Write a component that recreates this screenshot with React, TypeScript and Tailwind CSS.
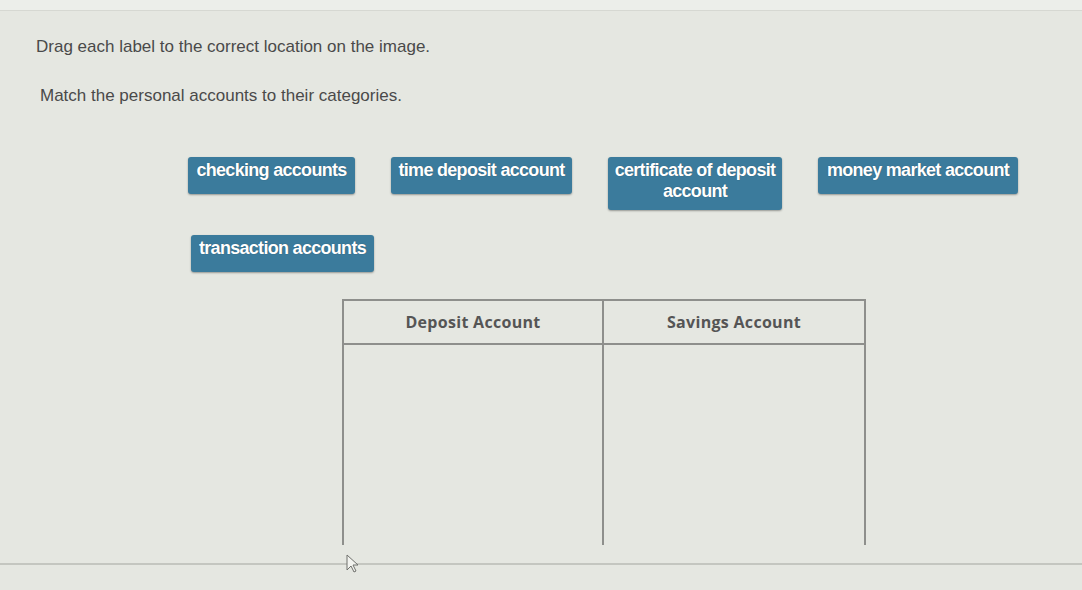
import { FC } from "react";

type Chip = { text: string; width: number; twoLine?: boolean };

const firstRow: Chip[] = [
  { text: "checking accounts", width: 167 },
  { text: "time deposit account", width: 181 },
  { text: "certificate of deposit account", width: 174, twoLine: true },
  { text: "money market account", width: 200 },
];

const LabelChip: FC<{ chip: Chip }> = ({ chip }) => (
  <div
    className={`bg-[#3b7b9c] rounded-[3px] shadow-[0_1px_2px_rgba(0,0,0,0.35)] text-center text-white font-bold text-[18px] leading-[21px] tracking-[-0.7px] pt-[3px] [text-shadow:0_0_1px_rgba(0,0,0,0.4)] ${
      chip.twoLine ? "h-[53px] px-1" : "h-[37px] px-0.5"
    }`}
    style={{ width: chip.width }}
  >
    {chip.text}
  </div>
);

const App: FC = () => {
  return (
    <div className="w-[1082px] h-[590px] overflow-hidden bg-[#e5e7e1] font-['Liberation_Sans',Arial,sans-serif] relative">
      <div className="h-[11px] bg-[#eceeea] border-b border-[#d6d8d2]" />

      <p className="ml-[36px] mt-[26px] text-[17px] text-[#4a4a4a] leading-[20px]">
        Drag each label to the correct location on the image.
      </p>
      <p className="ml-[40px] mt-[29px] text-[17px] text-[#4a4a4a] leading-[20px]">
        Match the personal accounts to their categories.
      </p>

      <div className="ml-[188px] mt-[51px] flex items-start gap-[36px]">
        {firstRow.map((chip) => (
          <LabelChip key={chip.text} chip={chip} />
        ))}
      </div>

      <div className="ml-[191px] mt-[25px]">
        <LabelChip chip={{ text: "transaction accounts", width: 183 }} />
      </div>

      {/* drop zones */}
      <div className="ml-[342px] mt-[27px] w-[524px] grid grid-cols-2 border-x-2 border-t-2 border-[#8e8f8c] font-['Open_Sans',sans-serif]">
        <div className="h-[44px] flex items-center justify-center border-r-2 border-b-2 border-[#8e8f8c] text-[16px] font-bold text-[#555] tracking-[0.3px]">
          Deposit Account
        </div>
        <div className="h-[44px] flex items-center justify-center border-b-2 border-[#8e8f8c] text-[16px] font-bold text-[#555] tracking-[0.3px]">
          Savings Account
        </div>
        <div className="h-[200px] border-r-2 border-[#8e8f8c]" />
        <div className="h-[200px]" />
      </div>

      <div className="mt-[18px] border-t-2 border-[#c4c6c0]" />

      {/* mouse pointer */}
      <svg
        className="absolute left-[346px] top-[554px]"
        width="14"
        height="20"
        viewBox="0 0 14 20"
      >
        <path
          d="M1 1 L1 16 L5 12 L8 18 L10 17 L7 11 L12 11 Z"
          fill="#f2f3ef"
          stroke="#6f706c"
          strokeWidth="1"
        />
      </svg>
    </div>
  );
};

export default App;
